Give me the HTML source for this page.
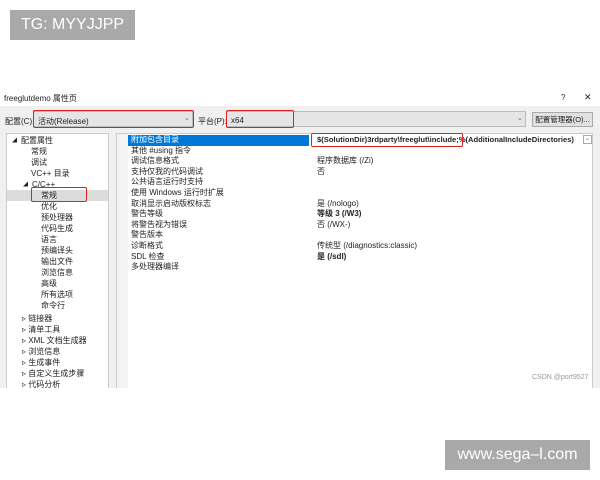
<!DOCTYPE html><html><head><meta charset="utf-8"><style>
body{margin:0;width:600px;height:480px;background:#fff;position:relative;overflow:hidden;font-family:"Liberation Sans","Noto Sans CJK SC",sans-serif;font-size:8px;color:#222}
.a{position:absolute;white-space:nowrap}
.red{position:absolute;border:1.5px solid #d22;border-radius:2px;box-sizing:border-box}
.t{position:absolute;left:0;height:11px;line-height:11px}
.g{position:absolute;left:0;height:10.6px;line-height:10.6px;width:100%}
.tri{font-size:5px;vertical-align:1px;margin-right:4px}
</style></head><body>
<div class="a" style="left:10px;top:10px;width:125px;height:30px;background:#a9a9a9;color:#fff;font-size:16px;line-height:30px;text-align:center">TG: MYYJJPP</div>
<div class="a" style="left:445px;top:440px;width:145px;height:30px;background:#a9a9a9;color:#fff;font-size:16px;line-height:30px;text-align:center">www.sega–l.com</div>
<div class="a" style="left:0;top:88px;width:600px;height:18px;background:#fff"></div>
<div class="a" style="left:4px;top:93px">freeglutdemo 属性页</div>
<div class="a" style="left:561px;top:93px">?</div><div class="a" style="left:584px;top:92px;font-size:9px">✕</div>
<div class="a" style="left:0;top:106px;width:600px;height:282px;background:#f0f0f0"></div>
<div class="a" style="left:5px;top:116px">配置(C):</div>
<div class="a" style="left:33px;top:111px;width:160px;height:16px;background:#e5e5e5;border:1px solid #bbb;box-sizing:border-box"></div>
<div class="a" style="left:38px;top:116px">活动(Release)</div>
<div class="a" style="left:184px;top:114px;font-size:7px;color:#666">⌄</div>
<div class="red" style="left:33px;top:110px;width:161px;height:18px"></div>
<div class="a" style="left:198px;top:116px">平台(P):</div>
<div class="a" style="left:226px;top:111px;width:300px;height:16px;background:#e5e5e5;border:1px solid #bbb;box-sizing:border-box"></div>
<div class="a" style="left:231px;top:116px">x64</div>
<div class="red" style="left:226px;top:110px;width:68px;height:18px"></div>
<div class="a" style="left:517px;top:114px;font-size:7px;color:#666">⌄</div>
<div class="a" style="left:532px;top:112px;width:61px;height:15px;background:#e1e1e1;border:1px solid #aaa;box-sizing:border-box;text-align:center;line-height:13px;font-size:7.5px">配置管理器(O)...</div>
<div class="a" style="left:6px;top:133px;width:103px;height:255px;background:#fff;border:1px solid #ccc;border-bottom:none;box-sizing:border-box"></div>
<div class="a" style="left:116px;top:133px;width:477px;height:255px;background:#fff;border:1px solid #ccc;border-bottom:none;box-sizing:border-box"></div>
<div class="a" style="left:117px;top:134px;width:11px;height:254px;background:#f3f3f3"></div>
<div class="a" style="left:593px;top:133px;width:7px;height:255px;background:#f0f0f0"></div>
<div class="a" style="left:7px;top:134px;width:101px;height:254px;overflow:hidden">
<div class="t" style="top:1px;left:5px"><span class="tri">◢</span>配置属性</div>
<div class="t" style="top:12px;left:24px">常规</div>
<div class="t" style="top:23px;left:24px">调试</div>
<div class="t" style="top:34px;left:24px">VC++ 目录</div>
<div class="t" style="top:45px;left:16px"><span class="tri">◢</span>C/C++</div>
<div class="t" style="top:56px;left:0;width:101px;background:#dcdcdc"></div>
<div class="t" style="top:56px;left:34px">常规</div>
<div class="t" style="top:67px;left:34px">优化</div>
<div class="t" style="top:78px;left:34px">预处理器</div>
<div class="t" style="top:89px;left:34px">代码生成</div>
<div class="t" style="top:100px;left:34px">语言</div>
<div class="t" style="top:111px;left:34px">预编译头</div>
<div class="t" style="top:122px;left:34px">输出文件</div>
<div class="t" style="top:133px;left:34px">浏览信息</div>
<div class="t" style="top:144px;left:34px">高级</div>
<div class="t" style="top:155px;left:34px">所有选项</div>
<div class="t" style="top:166px;left:34px">命令行</div>
<div class="t" style="top:179px;left:15px">▹ 链接器</div>
<div class="t" style="top:190px;left:15px">▹ 清单工具</div>
<div class="t" style="top:201px;left:15px">▹ XML 文档生成器</div>
<div class="t" style="top:212px;left:15px">▹ 浏览信息</div>
<div class="t" style="top:223px;left:15px">▹ 生成事件</div>
<div class="t" style="top:234px;left:15px">▹ 自定义生成步骤</div>
<div class="t" style="top:245px;left:15px">▹ 代码分析</div>
</div>
<div class="red" style="left:31px;top:187px;width:56px;height:15px"></div>
<div class="a" style="left:128px;top:135px;width:465px;height:140px">
<div class="g" style="top:0;left:0;width:181px;background:#0078d7"></div>
<div class="g" style="top:0;left:3px;color:#fff">附加包含目录</div>
<div class="g" style="top:0;left:189px;font-weight:bold;font-size:7.6px">$(SolutionDir)3rdparty\freeglut\include;%(AdditionalIncludeDirectories)</div>
<div class="g" style="top:10.6px;left:3px">其他 #using 指令</div>
<div class="g" style="top:21.2px;left:3px">调试信息格式</div><div class="g" style="top:21.2px;left:189px">程序数据库 (/Zi)</div>
<div class="g" style="top:31.8px;left:3px">支持仅我的代码调试</div><div class="g" style="top:31.8px;left:189px">否</div>
<div class="g" style="top:42.4px;left:3px">公共语言运行时支持</div>
<div class="g" style="top:53px;left:3px">使用 Windows 运行时扩展</div>
<div class="g" style="top:63.6px;left:3px">取消显示启动版权标志</div><div class="g" style="top:63.6px;left:189px">是 (/nologo)</div>
<div class="g" style="top:74.2px;left:3px">警告等级</div><div class="g" style="top:74.2px;left:189px;font-weight:bold">等级 3 (/W3)</div>
<div class="g" style="top:84.8px;left:3px">将警告视为错误</div><div class="g" style="top:84.8px;left:189px">否 (/WX-)</div>
<div class="g" style="top:95.4px;left:3px">警告版本</div>
<div class="g" style="top:106px;left:3px">诊断格式</div><div class="g" style="top:106px;left:189px">传统型 (/diagnostics:classic)</div>
<div class="g" style="top:116.6px;left:3px">SDL 检查</div><div class="g" style="top:116.6px;left:189px;font-weight:bold">是 (/sdl)</div>
<div class="g" style="top:127.2px;left:3px">多处理器编译</div>
</div>
<div class="a" style="left:583px;top:135px;width:9px;height:9px;border:1px solid #aaa;box-sizing:border-box;font-size:6px;line-height:7px;text-align:center;color:#666;background:#fff">⌄</div>
<div class="red" style="left:311px;top:133px;width:152px;height:14px"></div>
<div class="a" style="left:532px;top:374px;font-size:7px;color:#999">CSDN @port9527</div>
</body></html>
